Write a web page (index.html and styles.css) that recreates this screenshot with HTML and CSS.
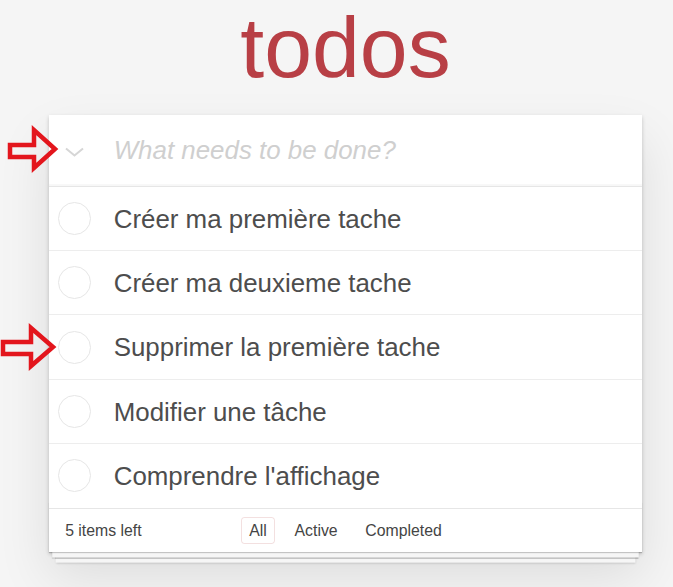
FILE: index.html
```html
<!DOCTYPE html>
<html lang="fr">
<head>
<meta charset="utf-8">
<title>todos</title>
<link rel="stylesheet" href="styles.css">
</head>
<body>
<div class="app">
  <h1 class="title">todos</h1>
  <section class="card">
    <header class="new-row">
      <span class="toggle-all">
        <svg width="20" height="10" viewBox="0 0 20 10"><polyline points="1,1.5 9.5,8.5 18,1.5" fill="none" stroke="#d6d6d6" stroke-width="2"/></svg>
      </span>
      <input class="new-todo" placeholder="What needs to be done?">
    </header>
    <ul class="list">
      <li class="item"><span class="check"></span><span class="label">Créer ma première tache</span></li>
      <li class="item"><span class="check"></span><span class="label">Créer ma deuxieme tache</span></li>
      <li class="item"><span class="check"></span><span class="label">Supprimer la première tache</span></li>
      <li class="item"><span class="check"></span><span class="label">Modifier une tâche</span></li>
      <li class="item"><span class="check"></span><span class="label">Comprendre l'affichage</span></li>
    </ul>
    <footer class="footer">
      <span class="count">5 items left</span>
      <ul class="filters">
        <li><a class="filter selected">All</a></li>
        <li><a class="filter">Active</a></li>
        <li><a class="filter">Completed</a></li>
      </ul>
      <span></span>
    </footer>
  </section>
</div>
<svg class="annot" width="673" height="587" viewBox="0 0 673 587">
  <polygon points="10,145 34,145 34,130 55,149 34,168 34,157 10,157" fill="none" stroke="#e3161d" stroke-width="4.5" stroke-linejoin="miter"/>
  <polygon points="3,342 31,342 31,328 53,347 31,366 31,354 3,354" fill="none" stroke="#e3161d" stroke-width="4.5" stroke-linejoin="miter"/>
</svg>
</body>
</html>
```
FILE: styles.css
```css
* { box-sizing: border-box; }

html, body {
  margin: 0;
  padding: 0;
}

body {
  background: #f5f5f5;
  font-family: "Liberation Sans", Arial, sans-serif;
  color: #4d4d4d;
  width: 673px;
  height: 587px;
  overflow: hidden;
  position: relative;
}

.app {
  width: 593px;
  margin-left: 49px;
}

.title {
  margin: 0;
  font-size: 86px;
  line-height: 94px;
  font-weight: normal;
  text-align: center;
  color: #b83f45;
}

.card {
  margin-top: 21px;
  background: #fff;
  position: relative;
  box-shadow: 0 2px 4px 0 rgba(0,0,0,0.2), 0 25px 50px 0 rgba(0,0,0,0.1);
}

.new-row {
  display: flex;
  align-items: center;
  border-bottom: 1px solid #e6e6e6;
  box-shadow: inset 0 -2px 1px rgba(0,0,0,0.03);
}

.toggle-all {
  width: 64.7px;
  flex: none;
  padding-left: 16px;
  padding-top: 3px;
  display: flex;
  align-items: center;
}

.toggle-all svg { display: block; }

.new-todo {
  flex: 1;
  min-width: 0;
  border: none;
  outline: none;
  background: transparent;
  margin: 0;
  padding: 17.25px 16px 17.25px 0;
  font-family: inherit;
  font-size: 25.9px;
  line-height: 36.2px;
  height: 70.7px;
  color: #4d4d4d;
}

.new-todo::placeholder {
  font-style: italic;
  color: #cfcfcf;
  font-weight: 300;
}

.list {
  list-style: none;
  margin: 0;
  padding: 0;
}

.item {
  display: flex;
  align-items: center;
  border-bottom: 1px solid #ededed;
  padding-left: 8.5px;
}

.item:last-child { border-bottom: none; }

.check {
  flex: none;
  width: 33px;
  height: 33px;
  border-radius: 50%;
  border: 1px solid #e6e6e6;
}

.label {
  margin-left: 23.2px;
  padding: 17px 0 15.4px;
  font-size: 25.9px;
  line-height: 31px;
  color: #4d4d4d;
}

.footer {
  position: relative;
  display: grid;
  grid-template-columns: 1fr auto 1fr;
  align-items: center;
  height: 44.2px;
  padding: 1px 16.2px 0;
  border-top: 1px solid #e6e6e6;
  font-size: 15.8px;
  color: #444;
}

.footer::before {
  content: '';
  position: absolute;
  left: 0;
  right: 0;
  bottom: 0;
  height: 50px;
  pointer-events: none;
  box-shadow: 0 1px 1px rgba(0,0,0,0.2),
              0 8.6px 0 -3.2px #f6f6f6,
              0 9.7px 1px -3.2px rgba(0,0,0,0.2),
              0 17.2px 0 -6.5px #f6f6f6,
              0 18.3px 2.2px -6.5px rgba(0,0,0,0.2);
}

.count {
  position: relative;
}

.filters {
  list-style: none;
  margin: 0;
  padding: 0;
  position: relative;
}

.filters li { display: inline; }

.filter {
  display: inline-block;
  margin: 3.2px;
  padding: 3.2px 7.5px;
  border: 1px solid transparent;
  border-radius: 3.2px;
  line-height: 19px;
  color: inherit;
}

.filter.selected {
  border-color: rgba(175,47,47,0.15);
}

.annot {
  position: absolute;
  left: 0;
  top: 0;
  pointer-events: none;
}
```
